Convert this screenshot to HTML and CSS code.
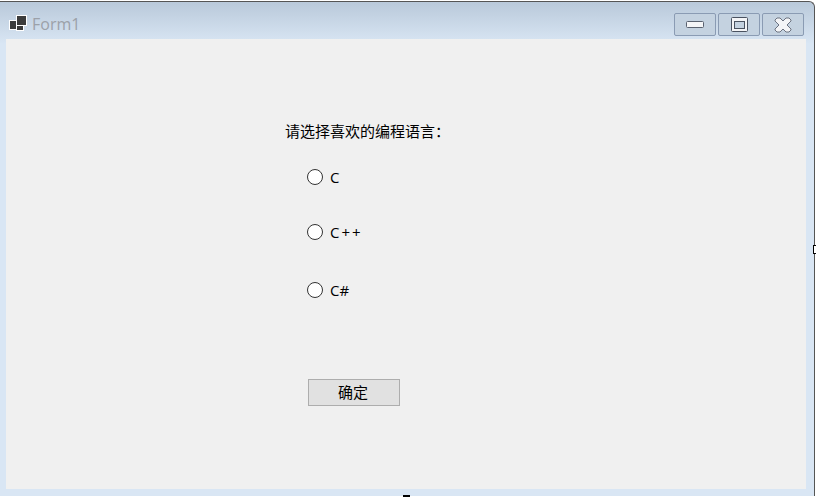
FILE: index.html
```html
<!doctype html>
<html>
<head>
<meta charset="utf-8">
<title>Form1</title>
<link rel="stylesheet" href="styles.css">
</head>

<body>
<div class="win">
	<div class="title_bar">
		<svg class="app_icon" width="18" height="16" viewBox="0 0 18 16">
			<rect x="0.500" y="5.500" width="7" height="9" fill="#3c3c3c" stroke="#fff"/>
			<rect x="7.500" y="0.500" width="10" height="10" fill="#3c3c3c" stroke="#fff"/>
			<rect x="7.500" y="10.500" width="7" height="5" fill="#3c3c3c" stroke="#fff"/>
		</svg>
		<span class="title_text">Form1</span>
		<div class="win_btns">
			<a href="javascript:;" class="win_btn">
				<svg width="18" height="7" viewBox="0 0 18 7"><rect x="0.500" y="0.500" width="17" height="6" rx="1" fill="#f4f5f7" stroke="#5a6270"/></svg>
			</a>
			<a href="javascript:;" class="win_btn">
				<svg width="17" height="15" viewBox="0 0 17 15"><rect x="0.500" y="0.500" width="16" height="14" rx="1" fill="#f4f5f7" stroke="#4a5260"/><rect x="3.500" y="4.500" width="10" height="7" fill="#c4d2e0" stroke="#4a5260"/></svg>
			</a>
			<a href="javascript:;" class="win_btn">
				<svg width="18" height="16" viewBox="0 0 18 16"><path d="M1 3L3 1H6L9 4L12 1H15L17 3V4L13 8L17 12V13L15 15H12L9 12L6 15H3L1 13V12L5 8L1 4Z" fill="#f4f5f7" stroke="#6b7280"/></svg>
			</a>
		</div>
	</div>
	<div class="client">
		<div class="lang_form">
			<div class="tip">请选择喜欢的编程语言：</div>
			<label class="radio_row r1"><i class="radio"></i>C</label>
			<label class="radio_row r2"><i class="radio"></i>C++</label>
			<label class="radio_row r3"><i class="radio"></i>C#</label>
			<a href="javascript:;" class="ok_btn">确定</a>
		</div>
	</div>
	<i class="grip grip_r"></i>
	<i class="grip grip_b"></i>
</div>
</body>
</html>
```

FILE: styles.css
```css
*{margin:0; padding:0; box-sizing:border-box;}
html,body{height:100%; background:#fff; overflow:hidden;}
body{padding-top:1px; font-family:"Open Sans","Noto Sans CJK SC",sans-serif; font-size:15px; color:#000;}
.win{position:relative; width:815px; height:495px; border-top:1px solid #555; border-right:1px solid #555; border-top-right-radius:6px; background:linear-gradient(#b9c9da 0,#d9e6f4 42px);}
.title_bar{display:flex; align-items:center; height:37px; padding:0 10px 0 9px;}
.app_icon{margin-top:5px;}
.title_text{margin:6px 0 0 5px; font-size:16px; color:#9ca1a9;}
.win_btns{display:flex; gap:2px; margin-left:auto; margin-top:8px;}
.win_btn{display:flex; align-items:center; justify-content:center; width:42px; height:23px; border:1px solid #8a9bb3; border-radius:2px; background:#c4d2e0;}
.client{height:450px; margin:0 8px 0 6px; background:#f0f0f0; overflow:hidden;}
.lang_form{display:flex; flex-direction:column; align-items:flex-start; padding:82px 0 0 279px;}
.tip{height:20px; line-height:20px;}
.radio_row{display:flex; align-items:center; height:20px; margin-left:22px; gap:7px; line-height:20px;}
.r1{margin-top:26px;}
.r2{margin-top:35px; letter-spacing:2px;}
.r3{margin-top:38px;}
.radio{width:16px; height:16px; border:1px solid #333; border-radius:50%; background:#fff;}
.ok_btn{display:block; width:92px; height:27px; margin:79px 0 0 23px; padding-right:2px; border:1px solid #adadad; background:#e1e1e1; color:#000; text-align:center; text-decoration:none; line-height:25px;}
.grip{position:absolute; display:block; background:#fff; border:1px solid #000;}
.grip_r{right:-3px; top:243px; width:4px; height:9px;}
.grip_b{left:403px; bottom:-1px; width:7px; height:2px; background:#000;}
```
